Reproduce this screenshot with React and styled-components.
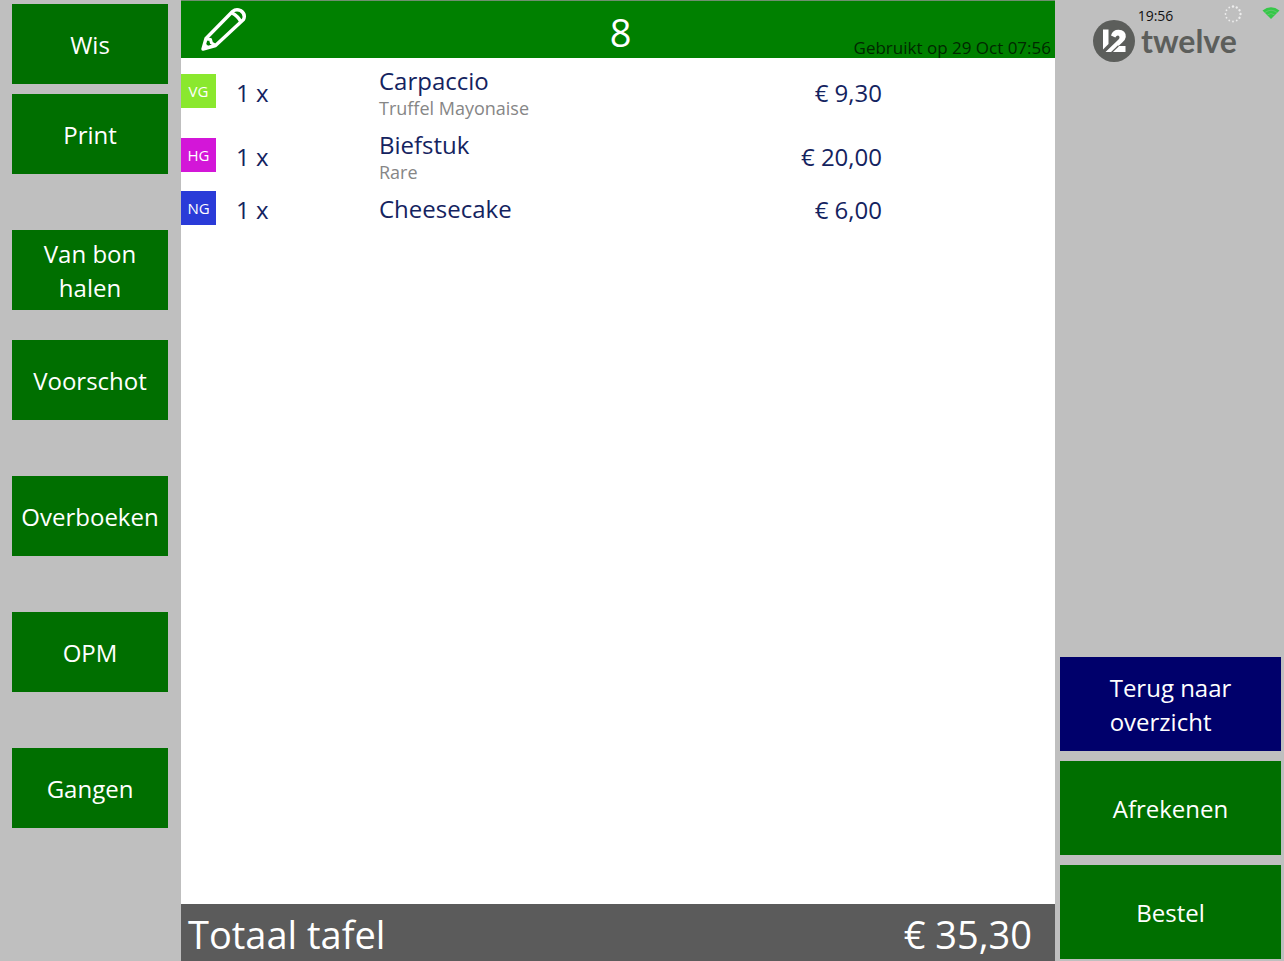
import React from 'react';
import styled, { createGlobalStyle } from 'styled-components';

const GlobalStyle = createGlobalStyle`
  * {
    box-sizing: border-box;
  }

  body {
    margin: 0;
    background: #bfbfbf;
    font-family: 'Open Sans', 'Noto Sans', sans-serif;
  }
`;

const Screen = styled.div`
  display: grid;
  grid-template-columns: 181px 1fr 229px;
  min-height: 100vh;
`;

const Sidebar = styled.nav`
  display: flex;
  flex-direction: column;
  padding: 4px 13px 4px 12px;
`;

const ButtonGroup = styled.div`
  display: flex;
  flex-direction: column;
  gap: ${props => props.$gap}px;
  margin-bottom: 56px;
`;

const Button = styled.button`
  display: flex;
  align-items: center;
  justify-content: center;
  height: ${props => (props.$large ? 94 : 80)}px;
  padding: 2px 4px 0;
  border: none;
  background: ${props => (props.$navy ? '#00006b' : '#006f00')};
  color: #ffffff;
  font-family: inherit;
  font-size: 24px;
  line-height: 34px;
  text-align: ${props => (props.$large ? 'left' : 'center')};
  cursor: pointer;
`;

const Order = styled.main`
  display: flex;
  flex-direction: column;
  background: #ffffff;
`;

const Header = styled.header`
  display: grid;
  grid-template-columns: 1fr auto 1fr;
  height: 58px;
  border-top: 1px solid #6f8f6f;
  background: #008000;
`;

const EditButton = styled.button`
  justify-self: start;
  align-self: start;
  display: flex;
  margin: 6px 0 0 19px;
  padding: 0;
  border: none;
  background: none;
  cursor: pointer;
`;

const TableNumber = styled.h1`
  height: 57px;
  margin: 0;
  padding: 3px 0 0 5px;
  color: #ffffff;
  font-size: 38px;
  font-weight: 400;
  line-height: 57px;
`;

const LastUsed = styled.span`
  justify-self: end;
  align-self: end;
  padding-right: 4px;
  color: #002800;
  font-size: 17px;
  line-height: 20px;
`;

const Lines = styled.table`
  width: 100%;
  margin-top: 1px;
  border-collapse: collapse;
  table-layout: fixed;
  color: #14235f;
  font-size: 24px;
  line-height: 34px;

  td {
    padding: 4px 0;
  }
`;

const BadgeCol = styled.col`
  width: 55px;
`;

const AmountCol = styled.col`
  width: 143px;
`;

const PriceCol = styled.col`
  width: 320px;
`;

const Badge = styled.span`
  display: block;
  width: 35px;
  background: ${props => props.$color};
  color: #ffffff;
  font-size: 15px;
  line-height: 34px;
  text-align: center;
`;

const Amount = styled.span`
  display: block;
  padding-top: 4px;
  line-height: 30px;
`;

const Price = styled(Amount)`
  padding-right: 173px;
  text-align: right;
  white-space: nowrap;
`;

const Product = styled.div`
  padding-top: 2px;
  line-height: 32px;
  white-space: nowrap;
`;

const Extra = styled.div`
  color: #868686;
  font-size: 18px;
  line-height: 22px;
`;

const Total = styled.footer`
  display: flex;
  align-items: center;
  justify-content: space-between;
  height: 57px;
  margin-top: auto;
  padding: 2px 23px 0 7px;
  background: #5b5b5b;
  color: #ffffff;
  font-size: 38px;
  line-height: 52px;
`;

const Panel = styled.aside`
  display: flex;
  flex-direction: column;
  padding: 5px 3px 2px 5px;
`;

const StatusBar = styled.div`
  display: grid;
  grid-template-columns: 1fr auto 1fr;
  height: 15px;
`;

const Clock = styled.time`
  grid-column: 2;
  padding-right: 30px;
  color: #111111;
  font-size: 14px;
  line-height: 21px;
`;

const StatusIcons = styled.div`
  display: flex;
  justify-content: flex-end;
  gap: 20px;
  padding-right: 1px;
`;

const Brand = styled.div`
  display: flex;
  align-items: center;
  gap: 6px;
  padding-left: 33px;
  color: #5c5e5b;
  font-family: Lato, sans-serif;
  font-size: 32px;
  font-weight: 700;
  line-height: 32px;
`;

const Actions = styled.div`
  display: flex;
  flex-direction: column;
  gap: 10px;
  margin-top: auto;
`;

const menu = [
  { gap: 10, items: ['Wis', 'Print'] },
  { gap: 30, items: ['Van bon halen', 'Voorschot'] },
  { gap: 0, items: ['Overboeken'] },
  { gap: 0, items: ['OPM'] },
  { gap: 0, items: ['Gangen'] }
];

const orderLines = [
  {
    course: 'VG',
    color: '#8ae82e',
    amount: 1,
    name: 'Carpaccio',
    extra: 'Truffel Mayonaise',
    price: '9,30'
  },
  {
    course: 'HG',
    color: '#d316d8',
    amount: 1,
    name: 'Biefstuk',
    extra: 'Rare',
    price: '20,00'
  },
  {
    course: 'NG',
    color: '#2a3bd8',
    amount: 1,
    name: 'Cheesecake',
    price: '6,00'
  }
];

const Pencil = () => (
  <svg
    width="48"
    height="46"
    viewBox="0 0 48 46"
    fill="none"
    stroke="#ffffff"
    strokeWidth="3.4"
    strokeLinejoin="round"
  >
    <path d="M3 42 L6 31.5 L32.5 4.5 Q36 1.5 40.5 3.5 Q46 7 43.5 12.5 L15.5 38.5 Z" />
    <path d="M32 6 Q38 9 41 15" />
    <path d="M6.5 32 L10.5 32.5 L11.5 36 L15 38" strokeWidth="3" />
    <path d="M3 42 L4.5 36 L9 40.3 Z" fill="#ffffff" strokeWidth="1" />
  </svg>
);

const Spinner = () => (
  <svg width="18" height="18" viewBox="0 0 18 18" fill="#ededed">
    {[0, 1, 2, 3, 4, 5, 6, 7, 8, 9, 10, 11].map(i => (
      <circle
        key={i}
        cx="9"
        cy="1.5"
        r={i < 5 ? 1.2 : 0.9}
        transform={`rotate(${i * 30} 9 9)`}
      />
    ))}
  </svg>
);

const Wifi = () => (
  <svg width="18" height="16" viewBox="0 0 18 16">
    <path d="M0.5 5.5 Q9 -1 17.5 5.5 L9 14 Z" fill="#35c848" />
    <path
      d="M3 7.5 Q9 3 15 7.5 M5.3 10 Q9 7 12.7 10"
      fill="none"
      stroke="#74c47c"
      strokeWidth="0.7"
    />
  </svg>
);

const LogoMark = () => (
  <svg width="42" height="42" viewBox="0 0 42 42">
    <circle cx="21" cy="21" r="21" fill="#5c5e5b" />
    <path d="M10 9.5 H15.5 V24 L10 29.5 Z" fill="#ffffff" />
    <path
      d="M18 15.5 Q19.5 9.8 25.5 9.8 Q33.2 10.2 32.8 17 Q32.5 19.5 29.5 22.3 L25.5 26 H32.5 V32 H12.5 L25.5 19.5 Q27.5 17 25.6 15.7 Q23.7 15.2 22.3 17.5 Z"
      fill="#ffffff"
    />
    <path d="M18.5 32.5 L25.5 25.8" stroke="#5c5e5b" strokeWidth="1.2" />
  </svg>
);

const App = () => {
  return (
    <>
      <GlobalStyle />
      <Screen>
        <Sidebar>
          {menu.map(group => (
            <ButtonGroup key={group.items[0]} $gap={group.gap}>
              {group.items.map(item => (
                <Button key={item} type="button">
                  {item}
                </Button>
              ))}
            </ButtonGroup>
          ))}
        </Sidebar>

        <Order>
          <Header>
            <EditButton type="button" aria-label="Wijzig">
              <Pencil />
            </EditButton>
            <TableNumber>8</TableNumber>
            <LastUsed>Gebruikt op 29 Oct 07:56</LastUsed>
          </Header>
          <Lines>
            <colgroup>
              <BadgeCol />
              <AmountCol />
              <col />
              <PriceCol />
            </colgroup>
            <tbody>
              {orderLines.map(line => (
                <tr key={line.name}>
                  <td>
                    <Badge $color={line.color}>{line.course}</Badge>
                  </td>
                  <td>
                    <Amount>{line.amount} x</Amount>
                  </td>
                  <td>
                    <Product>{line.name}</Product>
                    {line.extra && <Extra>{line.extra}</Extra>}
                  </td>
                  <td>
                    <Price>€ {line.price}</Price>
                  </td>
                </tr>
              ))}
            </tbody>
          </Lines>
          <Total>
            <span>Totaal tafel</span>
            <span>€ 35,30</span>
          </Total>
        </Order>

        <Panel>
          <StatusBar>
            <Clock>19:56</Clock>
            <StatusIcons>
              <Spinner />
              <Wifi />
            </StatusIcons>
          </StatusBar>
          <Brand>
            <LogoMark />
            twelve
          </Brand>
          <Actions>
            <Button type="button" $large $navy>
              Terug naar
              <br />
              overzicht
            </Button>
            <Button type="button" $large>
              Afrekenen
            </Button>
            <Button type="button" $large>
              Bestel
            </Button>
          </Actions>
        </Panel>
      </Screen>
    </>
  );
};

export default App;
